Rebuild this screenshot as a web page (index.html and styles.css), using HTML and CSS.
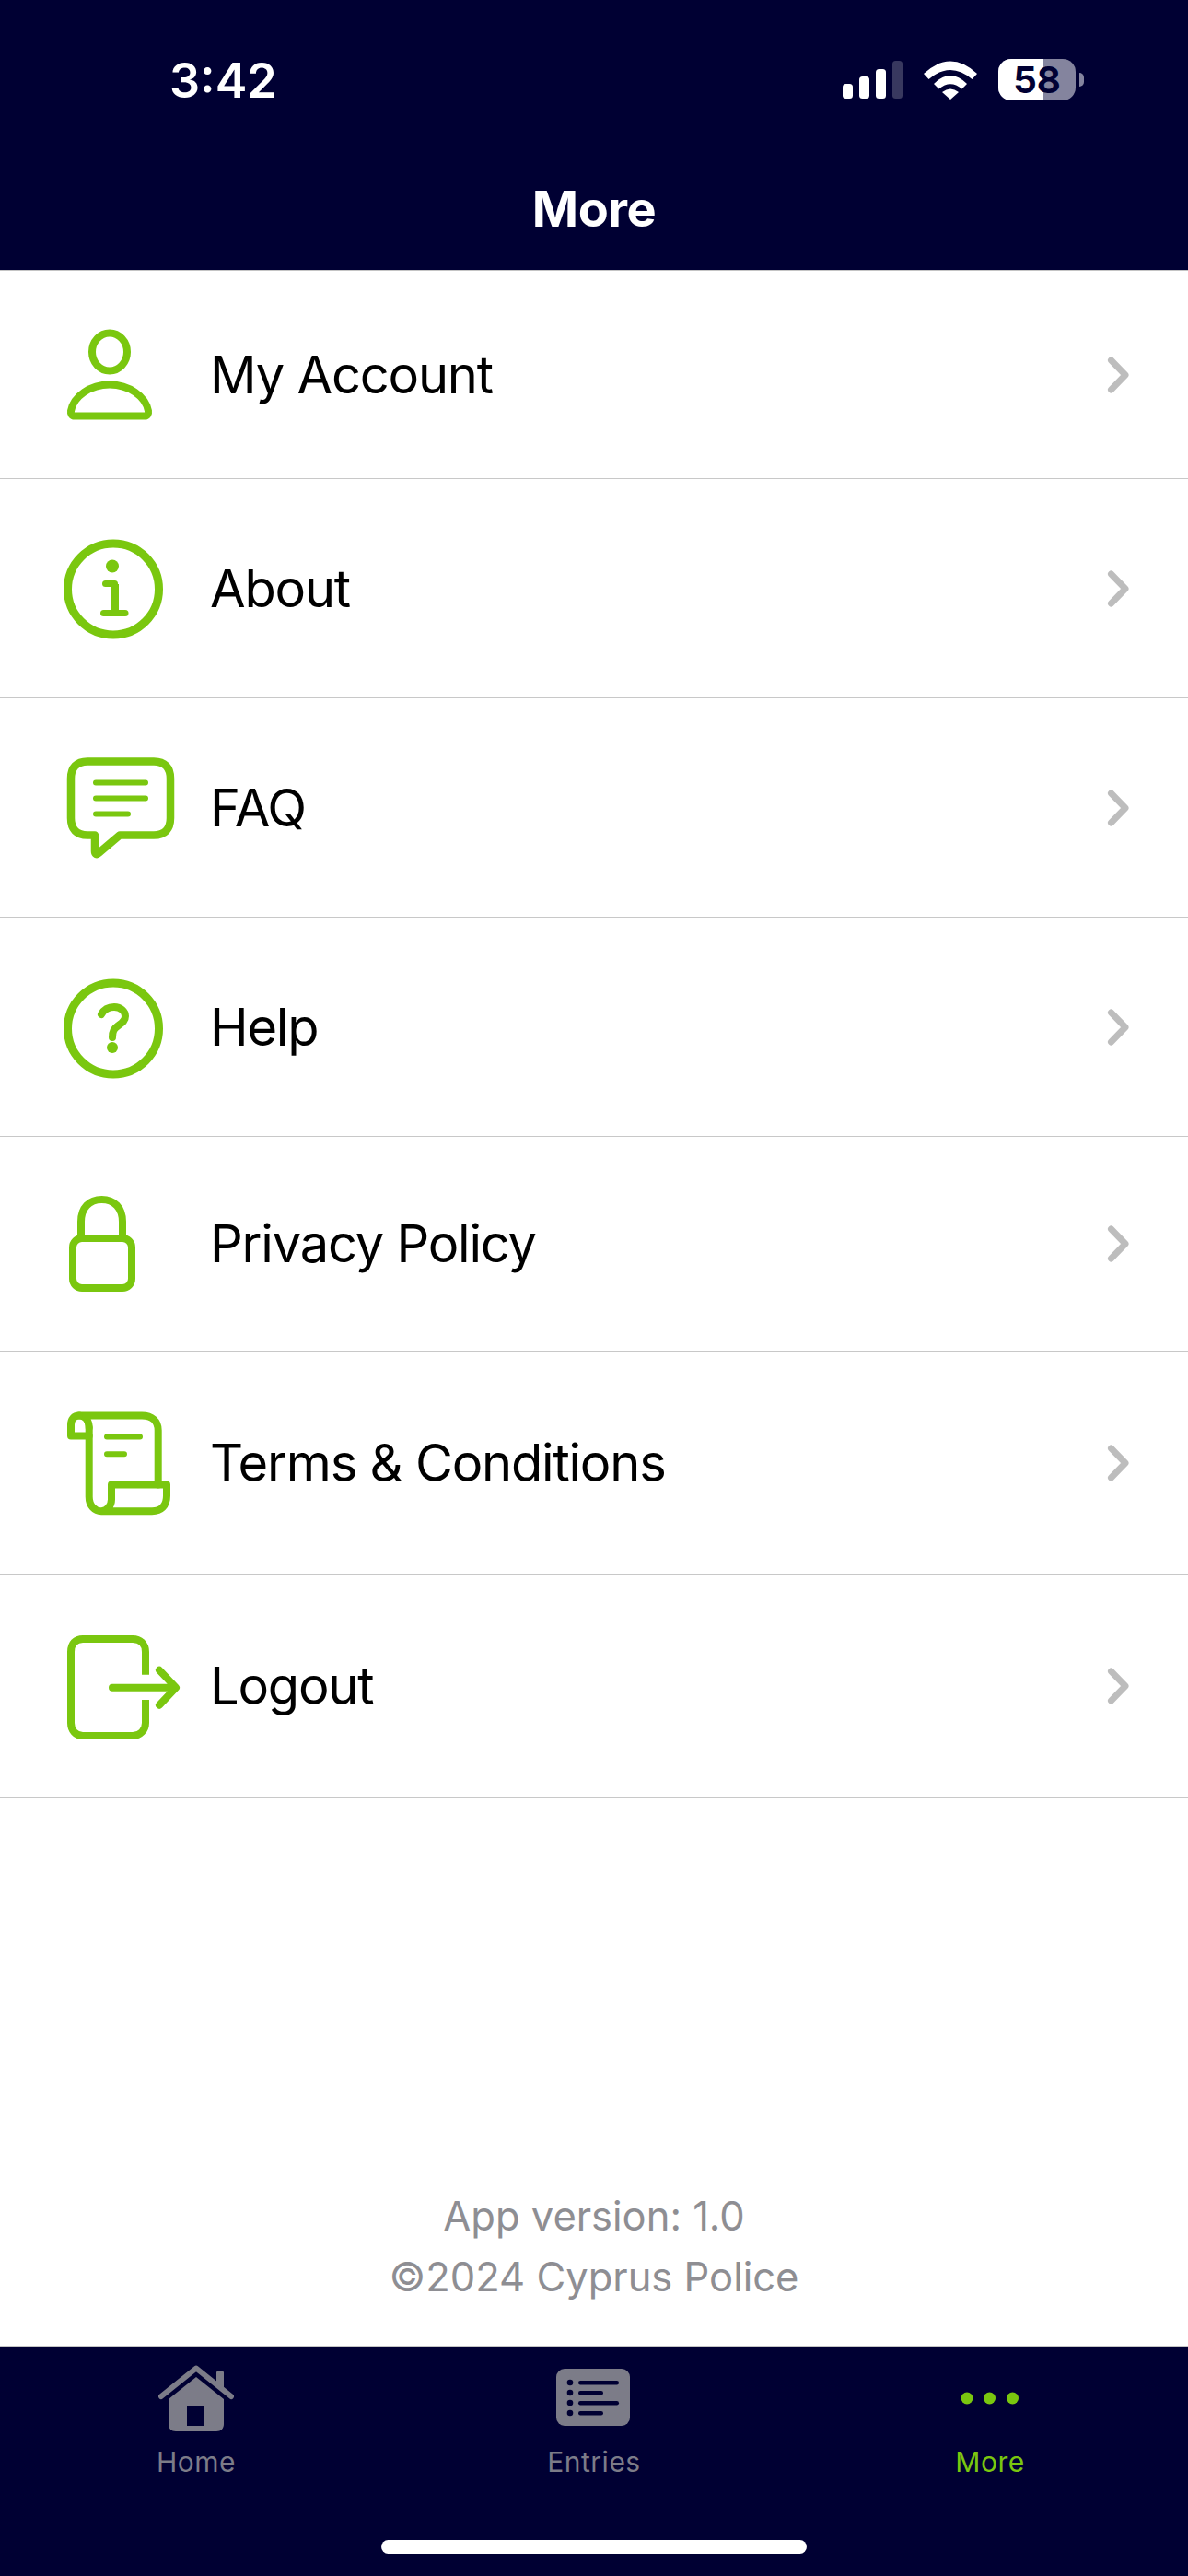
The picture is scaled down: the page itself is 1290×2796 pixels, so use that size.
FILE: index.html
```html
<!DOCTYPE html>
<html lang="en">
	<head>
		<meta charset="UTF-8">
		<title>More</title>
		<link rel="stylesheet" href="styles.css">
	</head>
	<body>
		<div class="screen">
			<div class="header">
				<div class="status">
					<span class="time">3:42</span>
					<div class="status-icons">
						<svg class="signal" width="65" height="42" viewBox="0 0 65 42">
							<rect x="0" y="25" width="11" height="16" rx="3.5" fill="#fff"/>
							<rect x="18" y="17" width="11" height="24" rx="3.5" fill="#fff"/>
							<rect x="36" y="9" width="11" height="32" rx="3.5" fill="#fff"/>
							<rect x="54" y="0" width="11" height="41" rx="3.5" fill="#38385f"/>
						</svg>
						<svg class="wifi" width="58" height="42" viewBox="0 0 58 42">
							<path d="M0 14Q29 -13 58 14L52.500 20Q29 0 5.500 20Z" fill="#fff"/>
							<path d="M11 25Q29 7 47 25L41.500 30.500Q29 20 16.500 30.500Z" fill="#fff"/>
							<path d="M20 34Q29 27 38 34L29 42Z" fill="#fff"/>
						</svg>
						<div class="battery">
							<div class="battery-body">
								<div class="battery-fill"></div>
								<span class="battery-num">58</span>
							</div>
							<div class="battery-cap"></div>
						</div>
					</div>
				</div>
				<h1 class="title">More</h1>
			</div>

			<div class="menu">
				<div class="row row-account">
					<svg class="row-icon" width="140" height="120" viewBox="0 0 140 120" fill="none" stroke="#7ac70f" stroke-width="8" stroke-linejoin="round">
						<ellipse cx="59" cy="35" rx="19" ry="20.500"/>
						<path d="M17 99C20 83 38 70.500 59 70.500C80 70.500 98 83 101 99C101.500 102 100 104.500 97 104.500H21C18 104.500 16.500 102 17 99Z"/>
					</svg>
					<span class="row-label">My Account</span>
					<svg class="chevron" width="28" height="40" viewBox="0 0 28 40"><path d="M6.500 4L22 20L6.500 36" fill="none" stroke="#bdbdbd" stroke-width="7" stroke-linecap="round" stroke-linejoin="round"/></svg>
				</div>
				<div class="row">
					<svg class="row-icon" width="140" height="120" viewBox="0 1 140 120" fill="none" stroke="#7ac70f" stroke-width="9" stroke-linecap="round">
						<circle cx="63" cy="61.500" r="49.500"/>
						<circle cx="62" cy="36.500" r="7" fill="#7ac70f" stroke="none"/>
						<path d="M54.500 55.500H64.500" stroke-width="7"/>
						<path d="M64.500 56V86" stroke-width="9" stroke-linecap="butt"/>
						<path d="M52.500 87.500H76" stroke-width="7"/>
					</svg>
					<span class="row-label">About</span>
					<svg class="chevron" width="28" height="40" viewBox="0 0 28 40"><path d="M6.500 4L22 20L6.500 36" fill="none" stroke="#bdbdbd" stroke-width="7" stroke-linecap="round" stroke-linejoin="round"/></svg>
				</div>
				<div class="row">
					<svg class="row-icon" width="140" height="120" viewBox="0 1 140 120" fill="none" stroke="#7ac70f" stroke-width="8.500" stroke-linecap="round" stroke-linejoin="round">
						<path d="M35 10.500H107C119 10.500 125 17 125 29V72C125 84 119 90.500 107 90.500H70L47 110C45 112 43 111 43 108V90.500H35C23 90.500 17 84 17 72V29C17 17 23 10.500 35 10.500Z"/>
						<path d="M44 33.500H98M44 50.500H98M44 67.500H79" stroke-width="6"/>
					</svg>
					<span class="row-label">FAQ</span>
					<svg class="chevron" width="28" height="40" viewBox="0 0 28 40"><path d="M6.500 4L22 20L6.500 36" fill="none" stroke="#bdbdbd" stroke-width="7" stroke-linecap="round" stroke-linejoin="round"/></svg>
				</div>
				<div class="row">
					<svg class="row-icon" width="140" height="120" viewBox="0 0.500 140 120" fill="none" stroke="#7ac70f" stroke-width="9" stroke-linecap="round">
						<circle cx="63" cy="62" r="49.500"/>
						<path d="M50 46.500C53 41 58 38.500 64 38.500C71 38.500 76 43 76 48.500C76 54 72 56 68 59C64 62 62 64 62 71.500" stroke-width="8"/>
						<circle cx="62" cy="82.500" r="6" fill="#7ac70f" stroke="none"/>
					</svg>
					<span class="row-label">Help</span>
					<svg class="chevron" width="28" height="40" viewBox="0 0 28 40"><path d="M6.500 4L22 20L6.500 36" fill="none" stroke="#bdbdbd" stroke-width="7" stroke-linecap="round" stroke-linejoin="round"/></svg>
				</div>
				<div class="row row-privacy">
					<svg class="row-icon" width="140" height="120" viewBox="0 0 140 120" fill="none" stroke="#7ac70f" stroke-width="8" stroke-linejoin="round">
						<rect x="19" y="54" width="64" height="54" rx="10"/>
						<path d="M28 54V36C28 21 37 12 50.500 12C64 12 73 21 73 36V54"/>
					</svg>
					<span class="row-label">Privacy Policy</span>
					<svg class="chevron" width="28" height="40" viewBox="0 0 28 40"><path d="M6.500 4L22 20L6.500 36" fill="none" stroke="#bdbdbd" stroke-width="7" stroke-linecap="round" stroke-linejoin="round"/></svg>
				</div>
				<div class="row row-terms">
					<svg class="row-icon" width="140" height="120" viewBox="0 0.500 140 120" fill="none" stroke="#7ac70f" stroke-width="8" stroke-linecap="round" stroke-linejoin="round">
						<path d="M36.700 22C36.700 14 32 9 26 9H94C105 9 111.700 15 111.700 25V84"/>
						<path d="M26 9C20 9 17 13 17 19V31H36.700"/>
						<path d="M36.700 22V97C36.700 107 43 112.700 50 112.700H105C115 112.700 121 107 121 96V84H61V100C61 107 56 112.700 50 112.700"/>
						<path d="M56 32H92M56 50.700H75" stroke-width="6"/>
					</svg>
					<span class="row-label">Terms &amp; Conditions</span>
					<svg class="chevron" width="28" height="40" viewBox="0 0 28 40"><path d="M6.500 4L22 20L6.500 36" fill="none" stroke="#bdbdbd" stroke-width="7" stroke-linecap="round" stroke-linejoin="round"/></svg>
				</div>
				<div class="row row-logout">
					<svg class="row-icon" width="140" height="120" viewBox="0 0 140 120" fill="none" stroke="#7ac70f" stroke-width="8" stroke-linecap="round" stroke-linejoin="round">
						<path d="M98 47.700V23C98 14 92 9 84 9H30C22 9 17 14 17 23V100C17 108 22 114 30 114H84C92 114 98 108 98 100V75" stroke-linecap="butt"/>
						<path d="M62 61.700H130M113 42.700L131 61.700L113 80.700"/>
					</svg>
					<span class="row-label">Logout</span>
					<svg class="chevron" width="28" height="40" viewBox="0 0 28 40"><path d="M6.500 4L22 20L6.500 36" fill="none" stroke="#bdbdbd" stroke-width="7" stroke-linecap="round" stroke-linejoin="round"/></svg>
				</div>
			</div>

			<div class="footer">
				<p class="version">App version: 1.0</p>
				<p class="version">©2024 Cyprus Police</p>
			</div>

			<div class="tabbar">
				<div class="tabs">
					<div class="tab tab-home">
						<svg width="82" height="72" viewBox="0 0 82 72">
							<path d="M41 13L71 37V64C71 69 68 72 63 72H19C14 72 11 69 11 64V37ZM31 44H50V66H31Z" fill="#7c7c88" fill-rule="evenodd"/>
							<rect x="63" y="7" width="8" height="18" rx="1" fill="#7c7c88"/>
							<path d="M3 34L41 3.500L79 34" fill="none" stroke="#7c7c88" stroke-width="6" stroke-linecap="round" stroke-linejoin="round"/>
						</svg>
						<span class="tab-label">Home</span>
					</div>
					<div class="tab">
						<svg width="82" height="72" viewBox="0 0 82 72">
							<rect x="0" y="4" width="80" height="62" rx="9" fill="#7c7c88"/>
							<g fill="#000033">
								<circle cx="15" cy="19" r="3.300"/>
								<circle cx="15" cy="30" r="3.300"/>
								<circle cx="15" cy="41" r="3.300"/>
								<circle cx="15" cy="52" r="3.300"/>
								<rect x="24" y="17" width="44" height="4.500" rx="2.200"/>
								<rect x="24" y="28" width="27" height="4.500" rx="2.200"/>
								<rect x="24" y="39" width="44" height="4.500" rx="2.200"/>
								<rect x="24" y="50" width="27" height="4.500" rx="2.200"/>
							</g>
						</svg>
						<span class="tab-label">Entries</span>
					</div>
					<div class="tab tab-active">
						<svg width="82" height="72" viewBox="0 0 82 72" fill="#7ac70f">
							<circle cx="16" cy="36" r="6.500"/>
							<circle cx="40.500" cy="36" r="6.500"/>
							<circle cx="65.500" cy="36" r="6.500"/>
						</svg>
						<span class="tab-label">More</span>
					</div>
				</div>
				<div class="home-bar"></div>
			</div>
		</div>
	</body>
</html>
```

FILE: styles.css
```css
* {
	box-sizing: border-box;
}
html, body {
	margin: 0;
	padding: 0;
	background: #fff;
}
.screen {
	width: 1290px;
	height: 2796px;
	display: flex;
	flex-direction: column;
	font-family: Inter, "Liberation Sans", sans-serif;
}
.header {
	height: 294px;
	background-color: #000033;
	color: #fff;
	border-bottom: 1px solid #c4c4c4;
}
.status {
	height: 197px;
	padding: 58px 0 0 184px;
	display: flex;
	justify-content: space-between;
	align-items: flex-start;
}
.time {
	font-size: 52px;
	font-weight: 600;
	line-height: 60px;
}
.status-icons {
	display: flex;
	align-items: flex-start;
	margin: 6px 113px 0 0;
	gap: 23px;
}
.signal, .wifi {
	margin-top: 2px;
}
.battery {
	display: flex;
	align-items: center;
	gap: 4px;
}
.battery-body {
	position: relative;
	width: 84px;
	height: 45px;
	border-radius: 14px;
	background-color: #84849e;
	display: flex;
	align-items: center;
	justify-content: center;
}
.battery-fill {
	position: absolute;
	left: 0;
	top: 0;
	bottom: 0;
	width: 49px;
	border-radius: 14px 0 0 14px;
	background-color: #fff;
}
.battery-num {
	position: relative;
	font-size: 40px;
	font-weight: 700;
	line-height: 45px;
	color: #000033;
}
.battery-cap {
	width: 5px;
	height: 15px;
	border-radius: 0 5px 5px 0;
	background-color: #84849e;
}
.title {
	margin: 0;
	text-align: center;
	font-size: 54px;
	font-weight: 700;
	line-height: 60px;
	letter-spacing: -0.5px;
}
.menu {
	display: flex;
	flex-direction: column;
}
.row {
	height: 238px;
	display: flex;
	align-items: center;
	padding: 0 62px 0 60px;
	border-bottom: 1px solid #c8c8c8;
}
.row-account {
	height: 226px;
}
.row-privacy {
	height: 233px;
}
.row-terms {
	height: 242px;
}
.row-logout {
	height: 243px;
}
.row-icon {
	flex: none;
	margin-right: 28px;
}
.row-label {
	flex: 1;
	font-size: 56px;
	color: #000;
	line-height: 66px;
	letter-spacing: -1.2px;
}
.footer {
	margin-top: auto;
	padding-bottom: 42px;
	text-align: center;
}
.version {
	margin: 0;
	font-size: 43.5px;
	line-height: 66px;
	color: #8e8e93;
}
.tabbar {
	height: 250px;
	background-color: #000033;
	border-top: 1px solid #c4c4c4;
	display: flex;
	flex-direction: column;
	align-items: center;
}
.tabs {
	width: 1290px;
	padding-top: 20px;
	display: grid;
	grid-template-columns: repeat(3, 1fr);
}
.tab {
	display: flex;
	flex-direction: column;
	align-items: center;
	gap: 13px;
	color: #7c7c88;
}
.tab-home {
	padding-right: 4px;
}
.tab-active {
	color: #7ac70f;
}
.tab-label {
	font-size: 30px;
	line-height: 40px;
	letter-spacing: 0.5px;
}
.home-bar {
	width: 462px;
	height: 15px;
	margin-top: 65px;
	border-radius: 8px;
	background-color: #fff;
}
```
